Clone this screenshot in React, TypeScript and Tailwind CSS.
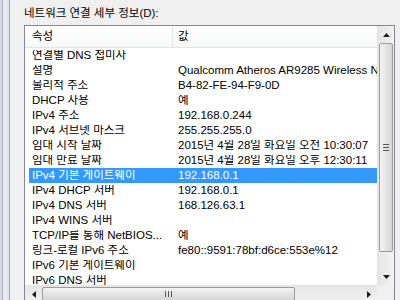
const rows: [string, string][] = [
  ["연결별 DNS 접미사", ""],
  ["설명", "Qualcomm Atheros AR9285 Wireless Network Adapter"],
  ["물리적 주소", "B4-82-FE-94-F9-0D"],
  ["DHCP 사용", "예"],
  ["IPv4 주소", "192.168.0.244"],
  ["IPv4 서브넷 마스크", "255.255.255.0"],
  ["임대 시작 날짜", "2015년 4월 28일 화요일 오전 10:30:07"],
  ["임대 만료 날짜", "2015년 4월 28일 화요일 오후 12:30:11"],
  ["IPv4 기본 게이트웨이", "192.168.0.1"],
  ["IPv4 DHCP 서버", "192.168.0.1"],
  ["IPv4 DNS 서버", "168.126.63.1"],
  ["IPv4 WINS 서버", ""],
  ["TCP/IP를 통해 NetBIOS...", "예"],
  ["링크-로컬 IPv6 주소", "fe80::9591:78bf:d6ce:553e%12"],
  ["IPv6 기본 게이트웨이", ""],
  ["IPv6 DNS 서버", ""],
]

const SELECTED = 8

function Arrow({ dir }: { dir: "up" | "down" | "left" | "right" }) {
  const pts = {
    up: "0,4 7,4 3.5,0",
    down: "0,0 7,0 3.5,4",
    left: "4,0 4,7 0,3.5",
    right: "0,0 0,7 4,3.5",
  }[dir]
  const vertical = dir === "up" || dir === "down"
  return (
    <svg width={vertical ? 7 : 4} height={vertical ? 4 : 7} viewBox={vertical ? "0 0 7 4" : "0 0 4 7"}>
      <polygon points={pts} fill="#1e1e1e" />
    </svg>
  )
}

export default function App() {
  return (
    <div
      className="flex h-[300px] w-[400px] overflow-hidden bg-[#f0f0f0] text-[11.5px] leading-none text-black"
      style={{ fontFamily: "'Liberation Sans', 'Noto Sans CJK KR', sans-serif" }}
    >
      {/* window frame */}
      <div className="flex h-full w-[10px] shrink-0">
        <div className="w-[2px] bg-[#d6dbe2]" />
        <div className="w-[1px] bg-[#a9b1bc]" />
        <div className="w-[6px] bg-gradient-to-r from-[#e9edf2] to-[#dfe4ea]" />
        <div className="w-[1px] bg-[#9aa3ae]" />
      </div>

      <div className="flex min-w-0 flex-1 flex-col pl-[14px]">
        {/* label */}
        <div className="flex h-[25px] shrink-0 items-center pt-[3px]">네트워크 연결 세부 정보(D):</div>

        {/* list view */}
        <div className="flex h-[278px] w-[371px] shrink-0 border border-[#828790] bg-white">
          <div className="flex w-[352px] flex-col">
            <div className="h-[259px] overflow-hidden">
              {/* header */}
              <div className="flex h-[22px] items-center border-b border-[#e5e5e5] bg-gradient-to-b from-white to-[#f7f8f9]">
                <div className="w-[147px] shrink-0 pl-[7px]">속성</div>
                <div className="h-full w-[1px] bg-[#e5e5e5]" />
                <div className="pl-[5px]">값</div>
              </div>
              {rows.map(([k, v], i) => (
                <div key={i} className="h-[15px] pl-[4px]">
                  <div
                    className={`flex h-full items-center whitespace-nowrap pl-[3px] ${
                      i === SELECTED ? "bg-[#3399ff] text-white" : ""
                    }`}
                  >
                    <div className="w-[146px] shrink-0 overflow-hidden">{k}</div>
                    <div className="overflow-hidden">{v}</div>
                  </div>
                </div>
              ))}
            </div>

            {/* horizontal scrollbar */}
            <div className="flex h-[17px] shrink-0 border-t border-[#e3e3e3] bg-gradient-to-b from-[#e6e6e6] to-[#f2f2f2]">
              <div className="flex w-[17px] items-center justify-center">
                <Arrow dir="left" />
              </div>
              <div className="my-[1px] w-[253px] rounded-[2px] border border-[#9c9c9c] bg-gradient-to-b from-[#f4f4f4] to-[#d6d6d6]">
                <div className="flex h-full items-center justify-center gap-[2px]">
                  <div className="h-[6px] w-[1px] bg-[#555]" />
                  <div className="h-[6px] w-[1px] bg-[#555]" />
                  <div className="h-[6px] w-[1px] bg-[#555]" />
                </div>
              </div>
              <div className="flex-1" />
              <div className="flex w-[17px] items-center justify-center">
                <Arrow dir="right" />
              </div>
            </div>
          </div>

          {/* vertical scrollbar */}
          <div className="flex w-[17px] flex-col">
            <div className="flex h-[259px] flex-col border-l border-[#e3e3e3] bg-gradient-to-r from-[#e6e6e6] to-[#f2f2f2]">
              <div className="flex h-[17px] items-center justify-center">
                <Arrow dir="up" />
              </div>
              <div className="mx-[1px] flex h-[209px] flex-col items-center justify-center gap-[2px] rounded-[2px] border border-[#9c9c9c] bg-gradient-to-r from-[#f4f4f4] to-[#d6d6d6]">
                <div className="h-[1px] w-[6px] bg-[#555]" />
                <div className="h-[1px] w-[6px] bg-[#555]" />
                <div className="h-[1px] w-[6px] bg-[#555]" />
              </div>
              <div className="flex-1" />
              <div className="flex h-[17px] items-center justify-center">
                <Arrow dir="down" />
              </div>
            </div>
            <div className="h-[17px] bg-[#f0f0f0]" />
          </div>
        </div>
      </div>
    </div>
  )
}
